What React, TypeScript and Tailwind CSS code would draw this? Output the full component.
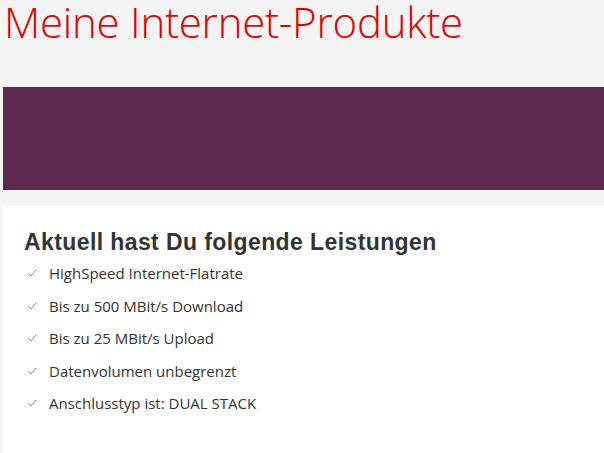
import React from "react";

const items = [
  "HighSpeed Internet-Flatrate",
  "Bis zu 500 MBit/s Download",
  "Bis zu 25 MBit/s Upload",
  "Datenvolumen unbegrenzt",
  "Anschlusstyp ist: DUAL STACK",
];

function Check() {
  return (
    <svg width="10" height="8" viewBox="0 0 10 8" className="shrink-0">
      <path d="M1 4.2 L3.8 7 L9 1" fill="none" stroke="#8a8a8a" strokeWidth="1" />
    </svg>
  );
}

export default function App() {
  return (
    <div className="min-h-[453px] w-[604px] bg-[#f4f4f4] overflow-hidden" style={{ fontFamily: "'Open Sans', sans-serif" }}>
      <h1 className="pl-[4px] h-[87px] text-[42px] leading-[44px] font-light text-[#e60000] tracking-[-0.25px]">
        Meine Internet-Produkte
      </h1>
      <div className="ml-[3px] h-[103px] bg-[#5e2750]" />
      <div className="ml-[3px] mt-[16px] h-[247px] bg-white pl-[21px] pt-[23px]">
        <h2 className="text-[23px] leading-[26px] font-bold text-[#333333] tracking-[0.4px]" style={{ fontFamily: "'Liberation Sans', Arial, sans-serif" }}>
          Aktuell hast Du folgende Leistungen
        </h2>
        <ul className="mt-[2px] flex flex-col">
          {items.map((t) => (
            <li key={t} className="flex items-center h-[32.5px] pl-[3px] gap-[12px] text-[15px] font-normal text-[#333333]">
              <Check />
              <span>{t}</span>
            </li>
          ))}
        </ul>
      </div>
    </div>
  );
}
